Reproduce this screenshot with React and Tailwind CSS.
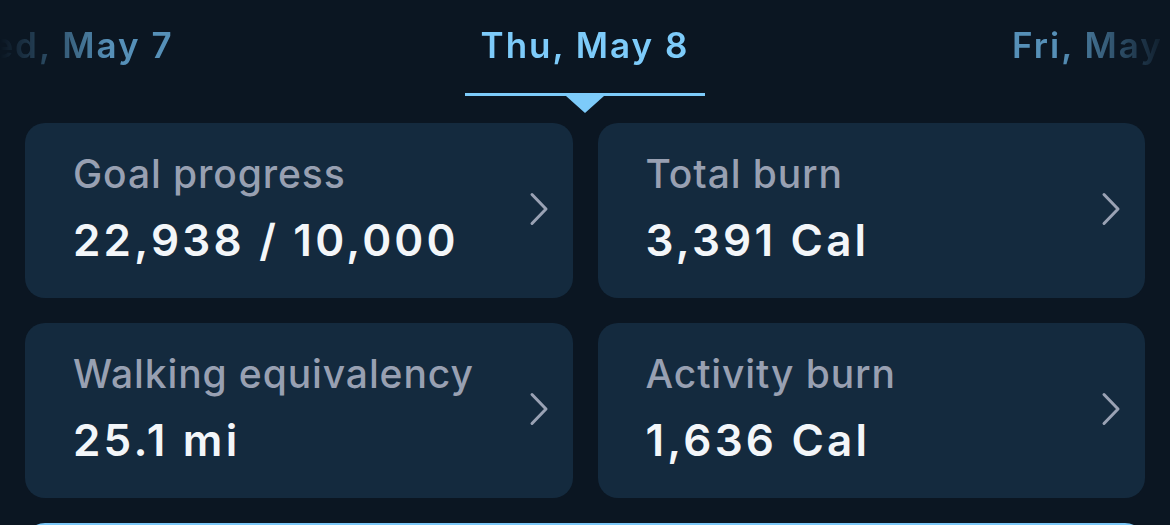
const dates = [
  { label: 'Wed, May 7', active: false },
  { label: 'Thu, May 8', active: true },
  { label: 'Fri, May 9', active: false },
];

const stats = [
  { title: 'Goal progress', value: '22,938 / 10,000' },
  { title: 'Total burn', value: '3,391 Cal' },
  { title: 'Walking equivalency', value: '25.1 mi' },
  { title: 'Activity burn', value: '1,636 Cal' },
];

const Chevron = () => (
  <svg width="20" height="34" viewBox="0 0 20 34" fill="none" className="shrink-0">
    <path d="M3 2.5 L17 17 L3 31.5" stroke="#9aa2b4" strokeWidth="3" strokeLinecap="round" strokeLinejoin="round" />
  </svg>
);

const StatCard = ({ title, value }) => (
  <div className="h-[175px] rounded-[20px] bg-[#142a3e] pl-[48px] pr-[24px] pb-[4px] flex items-center justify-between">
    <div className="flex flex-col">
      <span className="text-[39px] leading-[44px] font-medium text-[#98a0b2] tracking-[0.9px] whitespace-nowrap">{title}</span>
      <span className="mt-[19px] text-[44px] leading-[50px] font-semibold text-[#f3f6f9] tracking-[3.2px] whitespace-nowrap">{value}</span>
    </div>
    <Chevron />
  </div>
);

export default function App() {
  return (
    <div className="w-[1170px] h-[525px] overflow-hidden bg-[#0b1622] font-['Inter','Noto_Sans',sans-serif]">
      <div className="relative h-[96px] flex justify-center overflow-hidden [mask-image:linear-gradient(to_right,transparent_0px,black_110px,black_1060px,transparent_1170px)]">
        {dates.map((d) => (
          <div key={d.label} className="w-[520px] shrink-0 flex justify-center">
            {d.active ? (
              <div className="relative w-[240px] h-[96px] pt-[25px] border-b-[3px] border-[#7dcbfa] flex justify-center">
                <span className="text-[35px] leading-[40px] font-semibold text-[#7dcbfa] tracking-[2px] whitespace-nowrap">{d.label}</span>
              </div>
            ) : (
              <div className="pt-[25px]">
                <span className="text-[35px] leading-[40px] font-semibold text-[#5690b8] tracking-[2px] whitespace-nowrap">{d.label}</span>
              </div>
            )}
          </div>
        ))}
      </div>
      <div className="relative">
        <div className="absolute left-1/2 -translate-x-1/2 top-0 w-0 h-0 border-l-[19px] border-r-[19px] border-t-[17px] border-l-transparent border-r-transparent border-t-[#7dcbfa]" />
      </div>
      <div className="px-[25px] pt-[27px] grid grid-cols-2 gap-[25px]">
        {stats.map((s) => (
          <StatCard key={s.title} {...s} />
        ))}
      </div>
      <div className="mx-[25px] mt-[25px] h-[80px] rounded-[20px] border-[3px] border-[#7cc8f8] bg-[#0f2235]" />
    </div>
  );
}
